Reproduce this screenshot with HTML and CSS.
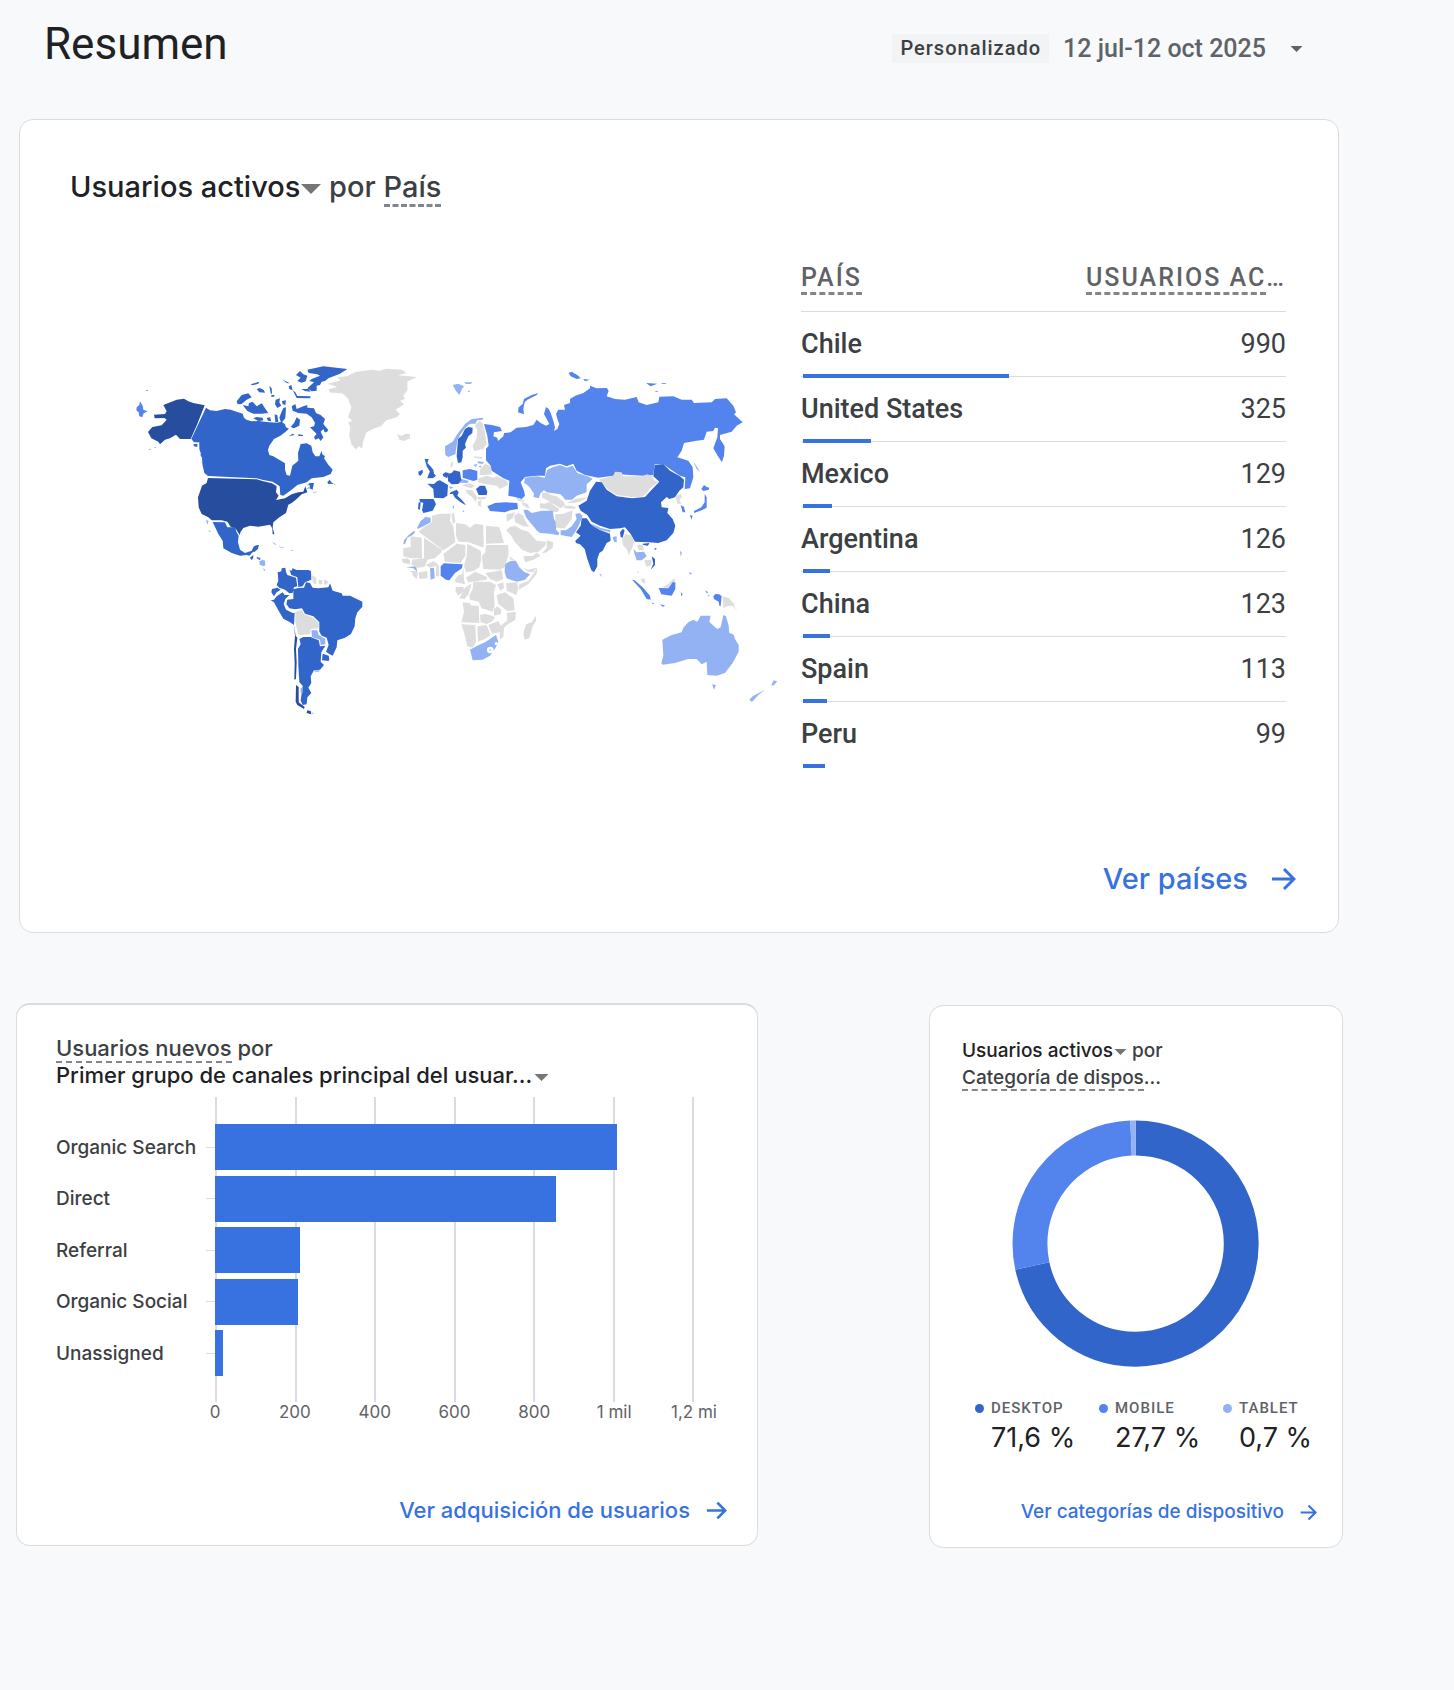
FILE: index.html
```html
<!DOCTYPE html>
<html lang="es">
<head>
<meta charset="utf-8">
<title>Resumen</title>
<meta name="viewport" content="width=device-width, initial-scale=1">
<link rel="stylesheet" href="styles.css">
</head>
<body>
<header class="page-header">
  <h1>Resumen</h1>
  <div class="range">
    <span class="chip">Personalizado</span>
    <button type="button" class="range-button">12 jul-12 oct 2025<svg class="range-caret" viewBox="0 0 14 7" aria-hidden="true"><path d="M0 0h14L7 7z"/></svg></button>
  </div>
</header>
<main>
  <section class="card card-wide">
    <h2 class="title-large"><button type="button" class="metric">Usuarios activos<svg class="caret" viewBox="0 0 20 10" aria-hidden="true"><path d="M0 0h20L10 10z"/></svg></button> por <span class="dashed">País</span></h2>
    <div class="geo">
      <svg class="map" viewBox="110 310 670 410" role="img" aria-label="Usuarios activos por país">
        <!-- North America -->
        <g transform="translate(110 350) scale(.33333)">
          <path class="c1" d="M160 168L185 158 200 152 222 149 235 157 250 162 284 169 262 225 242 270 210 270 198 257 180 268 165 272 150 286 145 278 124 268 114 249 127 234 155 229 170 212 163 207 134 208 132 197 165 195 170 187Z"/>
          <path class="c3" d="M90 157L98 170 100 182 113 187 101 193 97 205 88 202 86 190 79 184 80 175 88 168ZM108 124h6v2h-6zM114 301l9-2-2 3zM132 296l6-3-2 4z"/>
          <path class="c2" d="M288 176L300 184 320 186 345 180 362 182 380 188 398 194 402 206 409 212 425 217 445 216 470 219 500 221 515 218 525 226 528 235 537 239 525 250 510 261 492 270 478 290 474 303 478 318 490 322 500 328 525 343 525 362 530 378 540 380 547 350 565 335 564 312 572 285 590 283 604 290 608 310 616 322 628 322 635 305 637 316 645 322 642 328 655 347 668 362 662 375 640 384 605 388 590 400 562 408 545 422 520 440 511 438 509 412 488 398 460 393 440 388 294 381 283 372 277 345 276 325 268 300 268 280 252 280 244 270 265 225Z"/>
          <path class="c1" d="M294 387L440 391 460 397 486 403 500 412 498 430 506 440 498 453 525 448 545 436 565 430 580 428 586 412 592 430 575 436 560 450 545 462 535 467 528 492 508 505 490 520 488 535 493 556 488 556 487 538 480 527 445 533 420 530 400 537 392 548 389 558 378 540 362 533 352 518 335 514 305 514 295 505 275 495 266 475 264 445 276 410 290 402Z"/>
          <path class="c2" d="M308 519L345 520 352 535 375 535 380 550 386 560 384 580 390 602 405 612 425 605 432 592 447 588 440 602 428 610 418 620 410 618 390 620 365 612 340 598 338 575 325 555 318 540ZM420 624l10 4-6 4zM438 626l14 4-4 3z"/>
          <path class="c4" d="M288 513l8 2-4 12zM295 543l7 4-3 3zM456 632l8 4-2 16-14-6zM455 656l8 6 2 4zM490 582l8 3-2 3zM504 590l12 6-3 1zM542 603l10 2-8 1z"/>
          <path class="c2" d="M380 157L395 138 415 133 425 145 410 152 395 165 383 166ZM398 168L415 172 417 162 428 158 440 172 455 163 465 178 475 192 455 194 430 194 412 186ZM422 106L448 98 445 104 428 109ZM440 120L450 117 462 124 465 131 448 130ZM478 110l7 8 1 17-4-2zM497 152L510 148 508 160 514 170 502 177 495 166ZM516 90l10 6 14 7-10-1zM536 112l8-4 4 16-10-4zM484 138h9v5h-9zM516 156l12-2-2 14-8-2zM514 190l6-13 8-2-2 32-12 16-6-17zM430 208l10-4 18 2 2 8-14 3zM470 207l10-2 4 12-10-2zM494 196l8 3 3 20-9 1zM592 62L640 52 712 60 690 74 655 88 645 96 635 98 630 108 620 110 620 125 605 127 592 118 612 100 598 96 605 90 630 80 622 76 596 72ZM558 78L570 66 580 76 592 80 587 97 575 101 562 96 572 86ZM574 120L595 120 602 128 585 126ZM548 124L556 130 562 141 602 142 600 148 560 147ZM545 172L556 165 560 180 580 172 592 168 592 176 612 178 618 192 632 198 645 210 640 225 655 243 650 250 644 250 640 240 632 248 640 265 632 276 626 268 616 272 612 264 620 255 600 235 612 232 615 222 605 205 590 194 565 192 548 185ZM552 222L560 205 570 212 568 230 552 238 542 234ZM536 262l12-8 6 4-12 2zM565 256l14 2v3h-14zM652 400L659 392 664 400 672 404 655 405ZM594 406L600 402 612 402 608 422 598 418 600 410ZM250 286L262 284 262 294 252 292ZM270 316l8 2-2 8z"/>
          <path class="c4" d="M598 404l-6 4 2 4zM586 422l10-8 2 4zM606 432l16-6-6 5zM670 404l8 2-4 2z"/>
        </g>
        <path class="c0" transform="scale(1.0778)" d="M304 357L316 354 313 351 322 350 330 346 345 344 352 345 358 343 373 344 377 347 369 349 380 350 387 351 378 355 378 363 374 368 376 371 371 373 375 376 367 381 371 385 368 388 358 391 354 396 346 399 340 402 337 410 336 417 333 415 330 418 326 413 324 405 325 397 323 393 327 391 323 388 326 379 323 371 318 366 306 365 305 362 313 360Z"/>
        <!-- South America -->
        <g transform="translate(250 540) scale(.33333)">
          <path class="c2" d="M8 30L16 20 26 18 24 30 12 40ZM0 56l10-8 0 6-4 8zM20 54l10 2 2 4-10-2zM95 88L106 86 108 98 112 108 138 116 142 142 132 145 128 162 118 163 105 152 88 146 80 138 85 125 83 100 94 97ZM118 92L124 96 128 88 140 93 175 93 183 96 184 122 165 130 158 142 145 144 142 115 124 108ZM66 150L82 146 92 152 80 160 72 172 64 160ZM62 184L72 182 80 172 98 160 104 168 118 168 106 180 101 195 108 212 128 222 134 222 132 258 120 250 100 239 85 214 72 190ZM130 151L145 147 162 146 168 130 180 132 188 146 205 148 235 145 240 133 248 155 275 163 278 170 300 170 325 182 337 188 337 203 322 220 316 238 314 262 303 285 285 296 262 304 260 325 248 350 238 345 228 338 236 318 230 296 215 290 208 278 208 250 190 232 165 224 156 208 135 211 118 208 109 195 112 182 130 180ZM148 300L160 294 182 294 206 304 210 322 226 320 214 340 212 368 222 378 210 392 192 394 182 412 184 432 175 446 184 462 172 475 170 496 158 498 152 485 158 440 148 430 145 380 144 330 152 315ZM218 344L236 350 238 360 236 366 216 364Z"/>
          <path class="c0" d="M185 108l14 8 0 20-10-4zM205 122l12 2 0 12-10 0zM222 120l14 8-8 10-6-2zM136 218L156 212 162 226 190 236 206 252 206 268 182 270 180 286 150 288 144 284 136 250Z"/>
          <path class="c4" d="M184 274L202 274 206 288 226 300 226 316 212 318 210 302 186 294ZM28 66l16-2 2 16-16-2zM40 88l6 6-4 2zM66 10l8 2 0 4zM92 22l10 4-4 2zM122 33h8v2z"/>
          <path class="c1" d="M132 258L137 290 142 296 138 330 140 370 138 420 133 422 134 370 132 330 135 290ZM138 438l8 6 0 46 18 14-2 6-20-12-5-10zM172 514l10 2 2 10-14-4z"/>
          <path class="c4" d="M152 446h6v16h-6zM194 394h14v4h-14zM184 518l8 6-4 1z"/>
        </g>
        <!-- Europe, Russia and Central Asia -->
        <g transform="translate(390 350) scale(.33333)">
          <path class="c0" d="M22 256L35 260 48 254 60 256 60 268 42 276 28 272Z"/>
          <path class="c4" d="M188 108L205 104 222 112 216 120 208 138 198 126ZM222 100l26 0-6 5-14 0zM234 125h5v4h-5zM165 292L188 278 200 258 225 225 245 210 280 206 278 212 262 214 256 224 240 224 228 234 210 258 202 275 196 316 175 324 166 318ZM250 348l12-4-4 10zM262 337l20 2-4 6-14-2zM264 352l10-2-2 6zM205 393L215 390 236 396 232 402 210 401ZM176 412l14 3-8 5zM405 386L440 382 464 386 472 362 490 354 510 348 530 356 548 350 562 372 598 384 608 390 590 406 590 430 560 440 546 452 526 452 512 436 485 432 470 430 462 424 452 432 446 448 430 444 432 434 420 416 412 408 402 402Z"/>
          <path class="c3" d="M445 132L440 138 412 152 404 160 400 180 402 196 384 190 386 175 398 165 402 150 425 138ZM536 72L545 68 565 80 572 88 560 90 542 82ZM580 90L600 92 585 97ZM768 102L802 104 782 112ZM815 102h13v2h-13zM796 127h7v2h-7zM282 225L305 228 330 234 336 246 312 250 310 262 322 266 324 276 340 262 342 252 362 250 380 236 408 234 430 228 440 212 452 222 468 230 478 225 462 195 468 174 476 180 482 192 490 215 495 235 492 246 502 240 508 225 504 215 498 195 505 182 525 182 522 168 540 162 540 150 556 140 580 132 600 118 600 110 620 118 650 117 656 125 650 142 675 150 705 152 740 144 746 160 770 168 805 160 808 143 850 142 875 152 905 152 912 162 965 160 975 150 1010 148 1030 170 1038 190 1032 196 1058 220 1040 230 1025 248 990 258 990 270 1004 292 1002 320 996 340 984 322 970 298 982 265 984 238 975 236 970 246 950 248 942 272 920 275 882 282 875 305 862 325 895 335 908 355 910 385 900 418 884 420 886 385 870 380 840 360 820 345 794 346 790 378 760 380 720 378 690 376 680 368 670 380 625 386 585 378 560 365 550 344 530 352 510 344 480 350 468 358 465 380 440 380 405 384 392 400 402 425 405 440 395 450 375 444 355 440 358 395 340 388 320 375 305 365 302 350 288 334 288 300 296 290 292 260ZM218 364L240 360 262 366 262 392 250 396 218 386ZM292 472L315 462 345 460 382 462 384 480 360 484 345 490 300 486Z"/>
          <path class="c2" d="M225 240L235 234 248 236 247 252 235 262 225 285 228 296 218 305 218 325 214 340 204 342 200 322 204 270 215 260ZM104 330L116 330 112 342 120 350 130 362 132 374 138 380 130 387 112 388 116 376 120 368 110 352ZM85 368L97 362 99 370 92 380 86 378ZM112 404L132 405 142 396 150 394 174 408 172 440 160 448 132 446 130 420ZM174 374L185 372 192 364 210 368 214 394 205 405 185 406 174 396ZM158 376l8-6 10 2-4 16-12-6zM88 450L130 450 134 456 138 466 128 485 110 490 100 492 96 484 100 462 90 458ZM86 460L92 460 90 482 84 480ZM178 436L182 430 200 422 206 430 202 440 215 452 228 468 222 466 210 458 195 446 188 434ZM258 420L270 410 285 410 292 428 290 438 266 438Z"/>
          <path class="c0" d="M256 228L268 215 278 222 284 250 290 285 280 300 252 306 248 290 260 268 262 242 256 234ZM182 342l8-4-2 14-6 4zM270 362L285 344 302 352 306 376 285 378 268 378ZM250 322l28 2-4 6-20-4zM265 388L290 380 310 386 320 382 352 396 354 408 330 420 320 410 285 405 264 400ZM216 408L240 402 254 410 245 418 232 415zM226 422l20 2 10 12 6 10-6 12-10-14-14-10zM262 444l28 0-4 6-20 2zM262 458l14-4-4 10 2 10-8-4zM378 446l20 6 6 6-18-2zM396 460l16 4 8 14-10-2-14-10zM456 430L472 432 490 440 500 442 520 458 526 468 512 478 490 465 475 455 456 446ZM450 462L462 464 480 458 490 468 508 480 504 488 490 490 470 480 450 478ZM530 462L556 450 595 444 570 458 550 462ZM522 470l20 0 16 4-4 6-30-2z"/>
        </g>
        <!-- Africa and the Middle East -->
        <g transform="translate(390 500) scale(.33333)">
          <path class="c4" d="M82 85L92 66 106 54 122 56 122 70 100 82 82 90ZM76 98L68 108 52 116 45 135 40 136 42 124 56 108 72 96ZM400 32L412 32 425 42 455 35 488 35 492 60 498 70 498 92 508 102 505 109 480 104 450 102 440 94 420 70 408 55ZM512 94L528 94 545 82 560 60 556 45 568 42 578 50 566 80 556 98 545 114 512 108ZM345 195L362 186 378 186 388 205 402 218 420 226 405 242 380 248 350 238 344 220ZM48 205L78 202 82 220 70 208ZM120 208L132 206 134 238 122 242ZM240 452L262 440 285 430 318 408 325 428 318 445 300 470 278 482 248 484ZM188 20h4v8h-4zM216 34l8 2-4 4z"/>
          <path class="c0" d="M86 98L102 84 126 70 126 50 150 44 182 44 180 65 190 82 196 130 160 154ZM184 44L192 42 196 68 188 76ZM198 72L225 76 240 86 255 74 280 78 281 146 236 130 206 128 198 110ZM288 80L328 84 342 132 288 134ZM40 148L62 144 62 112 95 116 96 178 62 178 40 172ZM102 116L156 152 154 160 135 178 112 182 104 204 80 206 64 196 66 182 102 178ZM160 165L200 134 226 138 226 170 212 192 165 188ZM232 134L272 155 274 180 268 205 250 216 228 220 222 200 230 170ZM288 138L354 138 356 165 344 205 330 212 280 210 276 170 286 160ZM385 272L388 256 415 246 430 225 442 205 440 225 415 255ZM402 208L415 212 440 206 430 220 412 218ZM358 170L366 178 382 188 362 183ZM228 236L256 218 292 235 290 242 235 250ZM286 222L335 214 340 240 320 248 300 240ZM195 240L206 228 216 226 220 205 222 240 225 256 196 250ZM36 180L52 178 60 184 60 196 38 192ZM108 198L132 186 146 198 120 206ZM86 220L112 216 112 238 88 240ZM138 202L146 198 148 232 138 232ZM58 216L66 220 68 230 80 240 84 222 80 216ZM198 264L220 264 222 275 205 290 196 275ZM226 264L244 254 236 285 224 300 208 298ZM250 248L300 248 318 258 312 280 314 320 308 338 275 328 266 308 240 302 238 290 248 270ZM322 256L340 250 342 268 330 275ZM348 252L382 250 384 265 380 288 350 275ZM320 288L345 280 370 298 374 334 352 336 325 315ZM218 310L240 312 244 320 266 320 268 372 214 370 222 340ZM270 347L288 345 305 350 316 355 305 368 290 375 272 370ZM312 330L322 322 334 332 332 346 312 350ZM350 342L378 338 376 362 350 378 342 386 340 414 330 420 328 384 352 364ZM295 378L325 366 332 380 328 400 306 404ZM214 376L256 378 258 430 248 446 232 442 222 400ZM262 382L290 378 302 408 285 420 264 428ZM438 350L438 366 428 382 418 418 404 422 400 404 408 376 425 370ZM348 94L360 84 375 80 395 92 415 98 440 125 468 128 466 140 445 158 420 162 396 152 375 130 362 108ZM470 124L490 130 488 146 470 160 455 164 470 146ZM400 172L430 170 440 160 452 170 430 182 405 190ZM372 50L385 42 400 50 406 66 418 84 400 82 376 70ZM350 46L375 40 368 58 350 68ZM495 46L520 44 548 34 545 60 525 88 498 86Z"/>
          <path class="c3" d="M152 202L162 193 218 196 216 208 195 222 178 244 168 242 152 230Z"/>
          <circle class="sea" cx="301" cy="453" r="10"/>
          <circle class="c0" cx="301" cy="453" r="4"/>
          <circle class="sea" cx="319" cy="434" r="5"/>
        </g>
        <!-- East Asia and India -->
        <g transform="translate(560 360) scale(.33333)">
          <path class="c0" d="M116 362L160 350 165 338 185 340 190 352 245 352 262 346 278 352 282 364 296 368 270 388 260 404 245 413 215 414 170 408 145 392ZM346 412L362 405 366 415 358 422 364 434 352 434Z"/>
          <path class="c2" d="M55 440L80 425 90 395 108 368 125 370 140 392 170 412 215 418 255 414 275 392 298 368 280 352 284 318 310 315 330 335 360 352 372 362 370 385 358 395 345 415 328 420 320 414 303 430 305 445 325 447 322 462 338 480 346 500 340 522 320 544 295 552 265 550 225 548 212 525 195 505 180 508 150 510 120 500 95 488 82 468 62 455ZM65 478L80 478 92 495 118 512 150 524 152 545 140 552 128 575 118 582 112 600 112 622 102 640 94 634 82 600 74 570 60 556 48 552 46 545 62 530 48 520 62 500ZM180 520l8-10 6 4-6 22-6-2z"/>
          <path class="c4" d="M96 495L120 506 152 514 150 520 120 512 98 502ZM158 534l12-2 0 18-8-2zM400 308L412 325 420 338 410 330ZM118 644l6 2 0 8z"/>
          <path class="c3" d="M432 378L440 384 448 386 446 392 430 396 424 390ZM434 405L440 415 440 446 425 454 402 462 402 456 424 445 434 430ZM390 468l8 2-4 12zM362 438l10 6 4 16-8 0z"/>
        </g>
        <!-- South-East Asia and Oceania -->
        <g transform="translate(600 510) scale(.33333)">
          <path class="c0" d="M66 92L76 75 92 78 104 98 96 118 90 128 88 140 80 120 70 110ZM110 110L128 106 132 124 118 124ZM132 154L154 152 154 168 140 174ZM122 210L134 208 136 224 126 220ZM190 233L205 224 222 208 226 216 210 228 205 236 192 236ZM368 262L385 266 402 284 404 294 413 305 398 292 385 290 370 298Z"/>
          <path class="c4" d="M100 120L110 130 132 128 140 142 125 154 110 154 104 136ZM112 188h3v3h-3zM240 125l6 6-4 12zM266 190l10 2-4 6zM187 392L215 378 245 370 250 356 265 340 280 332 292 338 302 320 332 320 328 338 342 352 352 360 362 355 370 318 378 322 386 350 388 372 400 376 405 390 416 408 416 428 398 462 375 492 350 500 322 498 320 458 305 466 290 450 265 450 225 462 188 467 184 462 190 440ZM336 526L348 528 342 542ZM514 528L520 516 520 514 532 517 520 530ZM448 572L458 562 495 542 475 558 456 579Z"/>
          <path class="c2" d="M128 104L148 102 144 110 130 108ZM155 142L165 150 165 168 152 182 160 164ZM163 117l8 2-6 4z"/>
          <path class="c3" d="M96 212L104 214 128 235 150 260 152 272 140 270 122 240ZM155 280l8 4-4 2zM180 286l16 4-8 3zM176 237L205 238 218 220 226 220 226 240 215 260 184 256ZM242 250l6 6-4 6zM340 262L346 255 358 256 365 262 362 292 358 290 356 278 342 270ZM316 244l8 6-4 3zM322 258l8 2-4 2z"/>
        </g>
      </svg>
      <div class="countries-wrap">
        <table class="countries">
          <thead>
            <tr><th scope="col"><span class="dashed">PAÍS</span></th><th scope="col"><span class="dashed">USUARIOS AC</span>…</th></tr>
          </thead>
          <tbody>
            <tr><th scope="row">Chile<span class="meter" style="width:85%"></span></th><td>990</td></tr>
            <tr><th scope="row">United States<span class="meter" style="width:28%"></span></th><td>325</td></tr>
            <tr><th scope="row">Mexico<span class="meter" style="width:12%"></span></th><td>129</td></tr>
            <tr><th scope="row">Argentina<span class="meter" style="width:11%"></span></th><td>126</td></tr>
            <tr><th scope="row">China<span class="meter" style="width:11%"></span></th><td>123</td></tr>
            <tr><th scope="row">Spain<span class="meter" style="width:10%"></span></th><td>113</td></tr>
            <tr><th scope="row">Peru<span class="meter" style="width:9%"></span></th><td>99</td></tr>
          </tbody>
        </table>
      </div>
    </div>
    <a class="more more-large" href="#paises">Ver países<svg viewBox="0 0 24 24" aria-hidden="true"><path d="M0 12h22M12 2l10 10-10 10"/></svg></a>
  </section>

  <div class="row">
    <section class="card card-bars">
      <h2 class="title-small title-bars"><span class="soft"><span class="dashed">Usuarios nuevos</span> por</span><br><button type="button" class="metric">Primer grupo de canales principal del usuar...<svg class="caret" viewBox="0 0 14 7" aria-hidden="true"><path d="M0 0h14L7 7z"/></svg></button></h2>
      <div class="chart">
        <div class="labels"><span>Organic Search</span><span>Direct</span><span>Referral</span><span>Organic Social</span><span>Unassigned</span></div>
        <div class="ticks"><i></i><i></i><i></i><i></i><i></i></div>
        <div class="lines"><i></i><i></i><i></i><i></i><i></i><i></i><i></i></div>
        <div class="bars">
          <div class="bar" style="width:84%"></div>
          <div class="bar" style="width:71.2%"></div>
          <div class="bar" style="width:17.8%"></div>
          <div class="bar" style="width:17.3%"></div>
          <div class="bar" style="width:1.7%"></div>
        </div>
        <div class="axis"><span>0</span><span>200</span><span>400</span><span>600</span><span>800</span><span>1 mil</span><span>1,2 mi</span></div>
      </div>
      <a class="more more-bars" href="#adquisicion">Ver adquisición de usuarios<svg viewBox="0 0 24 24" aria-hidden="true"><path d="M1 12h21M13 3l9 9-9 9"/></svg></a>
    </section>

    <section class="card card-donut">
      <h2 class="title-small"><button type="button" class="metric">Usuarios activos<svg class="caret" viewBox="0 0 14 7" aria-hidden="true"><path d="M0 0h14L7 7z"/></svg></button> <span class="soft">por<br><span class="dashed">Categoría de dispos</span>...</span></h2>
      <svg class="donut" viewBox="0 0 248 248" role="img" aria-label="Usuarios activos por categoría de dispositivo">
        <g transform="rotate(-90 124 124)" fill="none" stroke-width="35">
          <circle cx="124" cy="124" r="106" stroke="#3165c9" pathLength="1000" stroke-dasharray="716 284"/>
          <circle cx="124" cy="124" r="106" stroke="#5383ec" pathLength="1000" stroke-dasharray="277 723" stroke-dashoffset="-716"/>
          <circle cx="124" cy="124" r="106" stroke="#93b2f3" pathLength="1000" stroke-dasharray="7 993" stroke-dashoffset="-993"/>
        </g>
      </svg>
      <dl class="legend">
        <div><dt><i class="dot dot-desktop"></i>DESKTOP</dt><dd>71,6 %</dd></div>
        <div><dt><i class="dot dot-mobile"></i>MOBILE</dt><dd>27,7 %</dd></div>
        <div><dt><i class="dot dot-tablet"></i>TABLET</dt><dd>0,7 %</dd></div>
      </dl>
      <a class="more more-donut" href="#dispositivos">Ver categorías de dispositivo<svg viewBox="0 0 24 24" aria-hidden="true"><path d="M1 12h21M12 2l10 10-10 10"/></svg></a>
    </section>
  </div>
</main>
</body>
</html>
```
FILE: styles.css
```css
* {
  box-sizing: border-box;
}

body {
  margin: 0;
  background: #f8f9fb;
  color: #202124;
  font-family: Roboto, "Liberation Sans", sans-serif;
}

h1, h2, dl, dd {
  margin: 0;
}

button {
  padding: 0;
  border: 0;
  background: none;
  color: inherit;
  font: inherit;
  cursor: pointer;
}

.page-header {
  display: flex;
  align-items: center;
  justify-content: space-between;
  height: 119px;
  padding: 0 151px 32px 44px;
}

h1 {
  font-size: 44px;
  line-height: 52px;
  font-weight: 400;
}

.range {
  display: flex;
  align-items: center;
  gap: 14px;
  padding-top: 10px;
}

.chip {
  padding: 0 8px;
  background: #f1f3f4;
  color: #3c4043;
  font-size: 20px;
  line-height: 29px;
  font-weight: 500;
  letter-spacing: 1px;
}

.range-button {
  display: flex;
  align-items: center;
  gap: 24px;
  color: #5f6368;
  font-size: 25px;
  line-height: 29px;
  font-weight: 500;
}

.range-caret {
  width: 13px;
  height: 6px;
  fill: #5f6368;
}

.card {
  border: 1px solid #dadce0;
  border-radius: 14px;
  background: #fff;
}

.card-wide {
  display: flex;
  flex-direction: column;
  margin: 0 115px 0 19px;
  padding: 51px 0 37px;
}

.title-large,
.title-small,
.chart,
.more {
  font-family: Inter, Roboto, sans-serif;
}

.title-large {
  padding-left: 50px;
  color: #3c4043;
  font-size: 29px;
  line-height: 32px;
  font-weight: 500;
}

.metric {
  color: #202124;
}

.caret {
  margin-left: 1px;
  fill: #757575;
  vertical-align: middle;
}

.title-large .caret {
  width: 20px;
  height: 10px;
}

.dashed {
  border-bottom: 3px dashed #80868b;
}

.geo {
  display: flex;
  align-items: center;
  gap: 21px;
  margin-top: 57px;
  padding: 0 52px 0 90px;
}

.map {
  display: block;
  flex: 670 1 0;
  min-width: 0;
}

.c0 { fill: #dddddd; }
.c1 { fill: #264d9e; }
.c2 { fill: #3165c9; }
.c3 { fill: #5383ec; }
.c4 { fill: #93b2f3; }
.sea { fill: #fff; }

.countries-wrap {
  flex: 485 1 0;
}

.countries {
  width: 100%;
  table-layout: fixed;
  border-spacing: 0;
  color: #3c4043;
  font-size: 27px;
  line-height: 32px;
}

.countries th,
.countries td {
  position: relative;
  height: 65px;
  padding: 16px 0 0;
  border-bottom: 1px solid #dadce0;
  vertical-align: top;
  text-align: left;
  font-weight: 500;
  white-space: nowrap;
}

.countries td {
  font-weight: 400;
}

.countries td,
.countries th:last-child {
  text-align: right;
}

.countries thead th {
  height: 52px;
  padding-top: 2px;
  color: #5f6368;
  font-size: 25px;
  letter-spacing: 2px;
}

.countries tbody tr:last-child > * {
  border-bottom-color: transparent;
}

.meter {
  position: absolute;
  bottom: -2px;
  left: 2px;
  height: 4px;
  background: #3871e0;
}

.more {
  display: flex;
  align-items: center;
  align-self: flex-end;
  color: #3871e0;
  font-weight: 500;
  text-decoration: none;
}

.more svg {
  fill: none;
  stroke: #3871e0;
  stroke-width: 3;
}

.more-large {
  gap: 24px;
  margin: 96px 42px 0 0;
  font-size: 29px;
  line-height: 32px;
}

.more-large svg {
  width: 24px;
  height: 24px;
}

.row {
  display: grid;
  grid-template-columns: minmax(0, 742fr) minmax(0, 414fr);
  align-items: start;
  gap: 171px;
  margin-top: 70px;
  padding: 0 111px 80px 16px;
}

.title-small {
  font-size: 19px;
  line-height: 27px;
  font-weight: 500;
}

.title-small .dashed {
  border-bottom-width: 2px;
}

.title-small .caret {
  width: 13px;
  height: 6px;
}

.soft {
  color: #3c4043;
}

.card-bars {
  display: flex;
  flex-direction: column;
  padding: 30px 0 23px;
  border-top-width: 2px;
}

.title-bars {
  padding-left: 39px;
  font-size: 22px;
}

.title-bars .caret {
  width: 15px;
  height: 7px;
  margin-left: 2px;
}

.chart {
  display: grid;
  grid-template-columns: 150px 9px 1fr;
  grid-template-rows: 305px 20px;
  margin-top: 8px;
  padding: 0 63px 0 39px;
}

.labels,
.ticks,
.bars {
  display: grid;
  grid-template-rows: repeat(5, 46px);
  align-items: center;
  align-content: space-between;
  padding: 27px 0 26px;
}

.labels {
  color: #3c4043;
  font-size: 19px;
  font-weight: 500;
  white-space: nowrap;
}

.ticks i {
  height: 1px;
  background: #dadce0;
}

.lines,
.bars {
  grid-area: 1 / 3;
}

.lines {
  display: flex;
  justify-content: space-between;
}

.lines i {
  width: 2px;
  background: #dadce0;
}

.bar {
  height: 46px;
  background: #3871e0;
}

.axis {
  display: flex;
  grid-area: 2 / 3;
  justify-content: space-between;
  color: #5f6368;
  font-size: 17px;
  line-height: 20px;
  white-space: nowrap;
}

.axis span {
  display: flex;
  justify-content: center;
  width: 0;
}

.more-bars {
  gap: 16px;
  margin: 76px 30px 0 0;
  font-size: 22px;
  line-height: 24px;
}

.more-bars svg {
  width: 21px;
  height: 21px;
}

.card-donut {
  display: flex;
  flex-direction: column;
  margin-top: 2px;
  padding: 31px 0 23px;
}

.card-donut .title-small {
  padding-left: 32px;
}

.donut {
  align-self: center;
  width: 60%;
  margin-top: 29px;
}

.legend {
  display: grid;
  grid-template-columns: 124px 124px 1fr;
  margin: 31px 28px 0 45px;
}

.legend dt {
  display: flex;
  align-items: center;
  gap: 7px;
  color: #5f6368;
  font-size: 15px;
  line-height: 20px;
  font-weight: 500;
  letter-spacing: 1px;
}

.legend dd {
  margin: 4px 0 0 16px;
  font-family: Inter, Roboto, sans-serif;
  font-size: 27px;
  line-height: 32px;
  white-space: nowrap;
}

.dot {
  width: 9px;
  height: 9px;
  border-radius: 50%;
}

.dot-desktop { background: #3165c9; }
.dot-mobile { background: #5383ec; }
.dot-tablet { background: #93b2f3; }

.more-donut {
  gap: 16px;
  margin: 46px 25px 0 0;
  font-size: 19px;
  line-height: 24px;
}

.more-donut svg {
  width: 17px;
  height: 17px;
}
```
